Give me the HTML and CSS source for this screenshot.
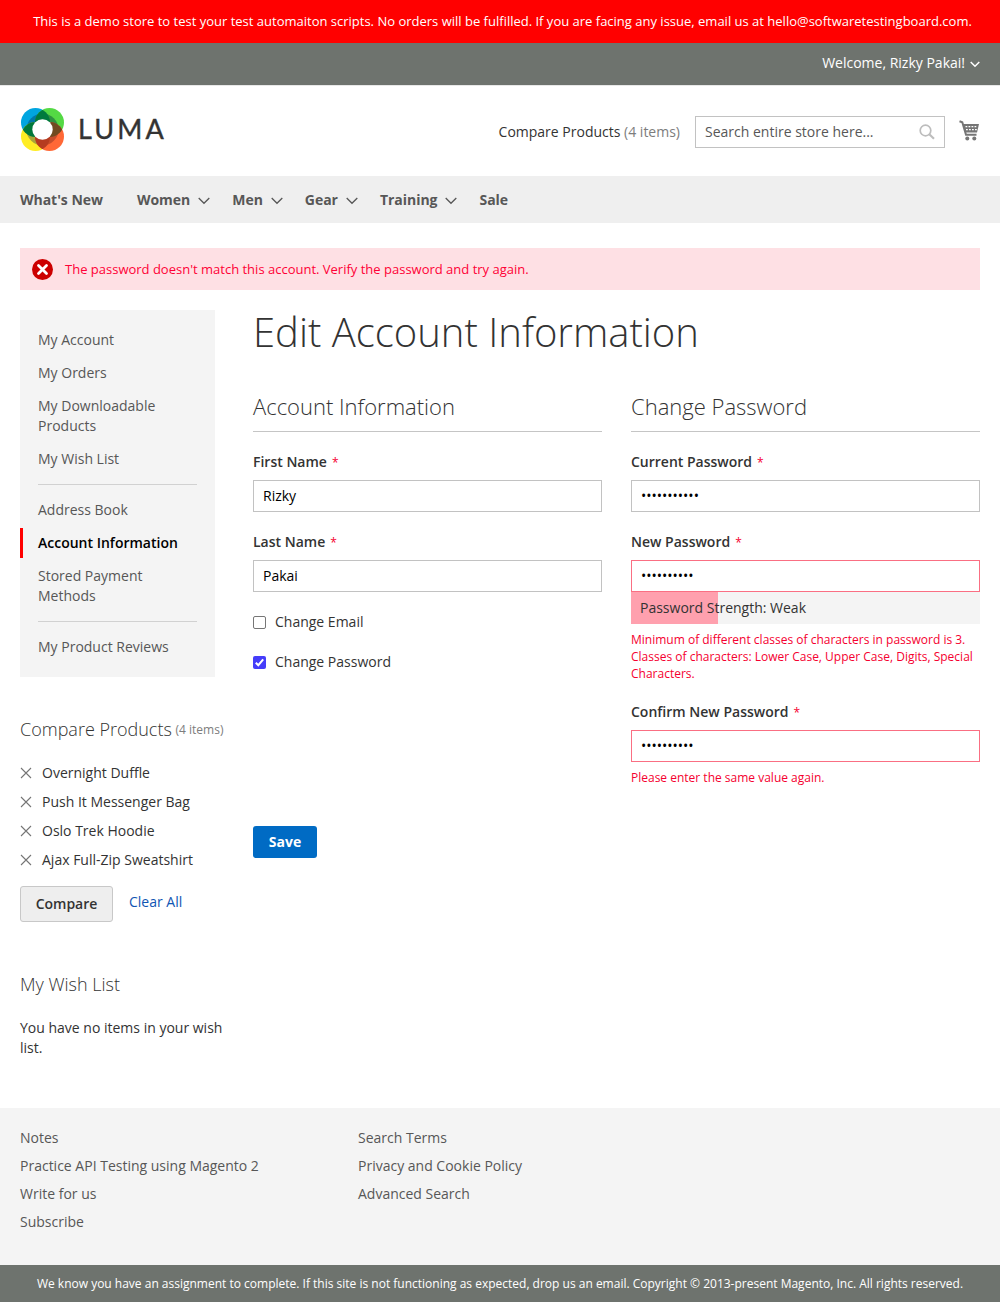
FILE: index.html
```html
<!DOCTYPE html>
<html lang="en">
<head>
<meta charset="utf-8">
<title>Edit Account Information</title>
<link rel="stylesheet" href="styles.css">
</head>
<body>
<svg class="defs" width="0" height="0">
  <symbol id="chevron" viewBox="0 0 12 8"><path d="M.7 1 6 6.300 11.300 1" fill="none" stroke="currentColor" stroke-width="1.300"/></symbol>
  <symbol id="cross" viewBox="0 0 12 12"><path d="M1 1l10 10M11 1L1 11" fill="none" stroke="currentColor" stroke-width="1.100"/></symbol>
</svg>
<div class="notice"><span>This is a demo store to test your test automaiton scripts. No orders will be fulfilled. If you are facing any issue, email us at hello@softwaretestingboard.com.</span></div>
<div class="panel"><span>Welcome, Rizky Pakai!</span><svg width="10" height="7" viewBox="0 0 10 7"><path d="M.7 1 5 5.200 9.300 1" fill="none" stroke="currentColor" stroke-width="1.500"/></svg></div>
<header class="header">
  <a class="logo">
    <svg width="44" height="44" viewBox="0 0 44 44">
      <defs>
        <clipPath id="tl"><circle cx="14.500" cy="14.500" r="14.500"/></clipPath>
        <clipPath id="tr"><circle cx="28.500" cy="14.500" r="14.500"/></clipPath>
        <clipPath id="bl"><circle cx="14.500" cy="28.500" r="14.500"/></clipPath>
        <clipPath id="br"><circle cx="28.500" cy="28.500" r="14.500"/></clipPath>
      </defs>
      <circle cx="14.500" cy="14.500" r="14.500" fill="#00a5e0"/>
      <circle cx="28.500" cy="14.500" r="14.500" fill="#54d944"/>
      <circle cx="14.500" cy="28.500" r="14.500" fill="#ffed24"/>
      <circle cx="28.500" cy="28.500" r="14.500" fill="#ff6836"/>
      <circle cx="21.500" cy="21.500" r="16" fill="#0076a8" clip-path="url(#tl)"/>
      <circle cx="21.500" cy="21.500" r="16" fill="#2f9140" clip-path="url(#tr)"/>
      <circle cx="21.500" cy="21.500" r="16" fill="#a9a637" clip-path="url(#bl)"/>
      <circle cx="21.500" cy="21.500" r="16" fill="#c64d2b" clip-path="url(#br)"/>
      <g clip-path="url(#tl)"><circle cx="28.500" cy="14.500" r="14.500" fill="#007a3d"/><circle cx="14.500" cy="28.500" r="14.500" fill="#00783a"/></g>
      <g clip-path="url(#br)"><circle cx="28.500" cy="14.500" r="14.500" fill="#704a20"/><circle cx="14.500" cy="28.500" r="14.500" fill="#b53b20"/></g>
      <circle cx="21.500" cy="21.500" r="10.200" fill="#fff"/>
    </svg>
    <span class="brand">LUMA</span>
  </a>
  <div class="tools">
    <span class="compare-link">Compare Products <em>(4 items)</em></span>
    <div class="search"><span>Search entire store here...</span>
      <svg width="16" height="16" viewBox="0 0 16 16" fill="none" stroke="#bdbdbd"><circle cx="6.500" cy="6.500" r="5.300" stroke-width="1.700"/><path d="M10.300 10.300 15 14.700" stroke-width="2.200"/></svg>
    </div>
    <svg class="cart" width="20" height="21" viewBox="0 0 20 21"><path d="M.5 1.200 3.300 2.300 7 14.700H17.500" fill="none" stroke="#757575" stroke-width="2"/><path d="M4 4H20L18 12.500H6.500Z" fill="#757575"/><path d="M6.500 6.700H18.500M7 9.700H18" stroke="#fff" stroke-width="1.200" stroke-dasharray="1.800 1.200"/><circle cx="8.300" cy="18.500" r="2" fill="#757575"/><circle cx="15.300" cy="18.500" r="2" fill="#757575"/></svg>
  </div>
</header>
<nav class="nav">
  <a class="first">What's New</a>
  <a>Women<svg width="12" height="8"><use href="#chevron"/></svg></a>
  <a>Men<svg width="12" height="8"><use href="#chevron"/></svg></a>
  <a>Gear<svg width="12" height="8"><use href="#chevron"/></svg></a>
  <a>Training<svg width="12" height="8"><use href="#chevron"/></svg></a>
  <a>Sale</a>
</nav>
<div class="message"><svg width="21" height="21" viewBox="0 0 21 21"><circle cx="10.500" cy="10.500" r="10.500" fill="#c00"/><path d="M6.500 6.500l8 8M14.500 6.500l-8 8" stroke="#fff" stroke-width="2.800" stroke-linecap="round"/></svg><span>The password doesn't match this account. Verify the password and try again.</span></div>
<div class="columns">
  <aside class="sidebar">
    <ul class="account-nav">
      <li>My Account</li>
      <li>My Orders</li>
      <li>My Downloadable Products</li>
      <li>My Wish List</li>
      <li class="rule"></li>
      <li>Address Book</li>
      <li class="current">Account Information</li>
      <li>Stored Payment Methods</li>
      <li class="rule"></li>
      <li>My Product Reviews</li>
    </ul>
    <section class="compare">
      <h3>Compare Products <small>(4 items)</small></h3>
      <ul>
        <li><svg width="12" height="12"><use href="#cross"/></svg>Overnight Duffle</li>
        <li><svg width="12" height="12"><use href="#cross"/></svg>Push It Messenger Bag</li>
        <li><svg width="12" height="12"><use href="#cross"/></svg>Oslo Trek Hoodie</li>
        <li><svg width="12" height="12"><use href="#cross"/></svg>Ajax Full-Zip Sweatshirt</li>
      </ul>
      <div class="actions"><button class="btn">Compare</button><a>Clear All</a></div>
    </section>
    <section class="wishlist">
      <h3>My Wish List</h3>
      <p>You have no items in your wish list.</p>
    </section>
  </aside>
  <main class="main">
    <h1>Edit Account Information</h1>
    <form>
      <div class="fieldsets">
        <div class="fieldset">
          <h2>Account Information</h2>
          <div class="field"><label>First Name<i>*</i></label><input type="text" value="Rizky"></div>
          <div class="field"><label>Last Name<i>*</i></label><input type="text" value="Pakai"></div>
          <label class="choice"><span class="box"></span>Change Email</label>
          <label class="choice"><span class="box checked"><svg width="13" height="13" viewBox="0 0 13 13"><path d="M2.800 6.700 5.300 9.200 10.200 3.400" fill="none" stroke="#fff" stroke-width="2"/></svg></span>Change Password</label>
        </div>
        <div class="fieldset">
          <h2>Change Password</h2>
          <div class="field"><label>Current Password<i>*</i></label><div class="secret">•••••••••••</div></div>
          <div class="field"><label>New Password<i>*</i></label><div class="secret invalid">••••••••••</div>
            <div class="meter">Password Strength: Weak</div>
            <div class="error">Minimum of different classes of characters in password is 3. Classes of characters: Lower Case, Upper Case, Digits, Special Characters.</div>
          </div>
          <div class="field"><label>Confirm New Password<i>*</i></label><div class="secret invalid">••••••••••</div>
            <div class="error">Please enter the same value again.</div>
          </div>
        </div>
      </div>
      <button class="save" type="button">Save</button>
    </form>
  </main>
</div>
<footer class="footer">
  <ul><li>Notes</li><li>Practice API Testing using Magento 2</li><li>Write for us</li><li>Subscribe</li></ul>
  <ul><li>Search Terms</li><li>Privacy and Cookie Policy</li><li>Advanced Search</li></ul>
</footer>
<div class="copyright"><span>We know you have an assignment to complete. If this site is not functioning as expected, drop us an email. Copyright © 2013-present Magento, Inc. All rights reserved.</span></div>
</body>
</html>
```
FILE: styles.css
```css
* { box-sizing: border-box; }
body { margin: 0; background: #fff; color: #333; font: 14px/20px "Open Sans", "Noto Sans", sans-serif; }
ul { list-style: none; margin: 0; padding: 0; }
h1, h2, h3, p { margin: 0; }
svg { flex: none; display: block; }
.defs { display: none; }
.notice { height: 43px; padding: 0 0 2px 5px; background: #f00; color: #fff; font-size: 13px; font-weight: 500; display: flex; align-items: center; justify-content: center; white-space: nowrap; }
.panel { height: 42px; padding: 0 20px 2px; background: #6e736e; color: #fff; font-weight: 500; display: flex; align-items: center; justify-content: flex-end; gap: 5px; }
.panel svg { margin-top: 2px; }
.header { height: 91px; padding: 0 20px; display: flex; justify-content: space-between; border-top: 1px solid #e8e8e8; }
.logo { display: flex; padding: 22px 0 0 1px; }
.brand { font: 27px/41px Lato, sans-serif; letter-spacing: 3.1px; margin-left: 13px; color: #333; -webkit-text-stroke: .4px #333; }
.tools { display: flex; height: 32px; margin-top: 30px; align-items: center; white-space: nowrap; }
.compare-link em { font-style: normal; color: #7d7d7d; }
.search { width: 250px; height: 32px; margin-left: 15px; padding: 0 9px; border: 1px solid #c2c2c2; display: flex; align-items: center; justify-content: space-between; color: #575757; }
.cart { margin: -3px 1px 0 14px; }
.nav { height: 47px; padding: 0 20px; background: #efefef; display: flex; align-items: center; color: #575757; font-weight: 700; }
.nav a { display: flex; align-items: center; gap: 8px; margin-right: 22px; white-space: nowrap; letter-spacing: -.03px; }
.nav .first { margin-right: 34px; }
.nav svg { margin-top: 2px; }
.message { margin: 25px 20px 20px; height: 42px; padding: 0 12px; background: #fee0e4; color: #ff0036; font-size: 13px; display: flex; align-items: center; gap: 12px; }
.columns { display: grid; grid-template-columns: 213px 727px; gap: 20px; padding: 0 20px; height: 798px; }
.account-nav { width: 195px; height: 367px; background: #f4f4f4; padding: 15px 0; color: #575757; }
.account-nav li { padding: 5px 35px 5px 15px; margin-bottom: 3px; border-left: 3px solid transparent; }
.account-nav li.current { color: #000; font-weight: 600; border-color: #f00; padding-right: 0; }
.account-nav li.rule { height: 1px; padding: 0; border: 0; margin: 10px 18px; background: #d1d1d1; }
h3 { font-size: 18px; line-height: 20px; font-weight: 300; white-space: nowrap; }
h3 small { font-size: 12px; line-height: 12px; font-weight: 400; color: #7d7d7d; margin-left: -1px; position: relative; top: -2px; }
.compare { margin-top: 42px; }
.compare ul { margin-top: 24px; }
.compare h3 { height: 20px; }
.compare li { display: flex; align-items: center; height: 20px; gap: 10px; margin-bottom: 9px; }
.compare li svg { color: #757575; }
.actions { display: flex; gap: 16px; margin-top: 16px; }
.btn { width: 93px; height: 36px; padding: 0; border: 1px solid #c8c8c8; border-radius: 3px; background: #eee; color: #333; font: 600 14px/20px "Open Sans", sans-serif; }
.actions a { color: #1055b3; line-height: 32px; }
.wishlist { margin-top: 52px; }
.wishlist p { margin-top: 24px; }
h1 { font-size: 40px; line-height: 44px; font-weight: 300; white-space: nowrap; }
.fieldsets { display: grid; grid-template-columns: 349px 349px; gap: 29px; height: 424px; margin-top: 38px; }
h2 { font-size: 22px; line-height: 28px; height: 40px; font-weight: 300; border-bottom: 1px solid #c5c5c5; margin-bottom: 20px; }
.field { margin-bottom: 20px; }
.field label { display: block; font-weight: 600; line-height: 20px; margin-bottom: 8px; }
.field label i { font: 400 12px/16px "Open Sans", sans-serif; color: #f50030; margin-left: 5px; }
.field input, .secret { display: block; width: 100%; height: 32px; border: 1px solid #c2c2c2; padding: 0 9px; color: #000; background: #fff; font: 14px/30px "Open Sans", sans-serif; }
.field input { padding-bottom: 2px; }
.secret.invalid { border-color: #fa6f83; }
.meter { height: 32px; padding: 0 9px; line-height: 32px; background: linear-gradient(90deg, #ffa0ae 87px, #f4f4f4 87px); }
.error { font-size: 12px; line-height: 17px; color: #f50030; margin-top: 7px; }
.choice { display: flex; align-items: center; height: 20px; gap: 9px; margin-bottom: 20px; }
.box { width: 13px; height: 13px; border: 1px solid #767676; border-radius: 2px; background: #fff; }
.box.checked { border: 0; background: #453dfa; }
.save { display: block; width: 64px; height: 32px; margin-top: 10px; padding: 0; border: 0; border-radius: 3px; background: #006bc4; color: #fff; font: 700 14px/20px "Open Sans", sans-serif; }
.footer { height: 157px; padding: 20px; background: #f4f4f4; color: #575757; display: grid; grid-template-columns: 338px 1fr; }
.footer li { margin-bottom: 8px; }
.copyright { height: 37px; background: #6e736e; color: #fff; font-size: 12px; font-weight: 500; display: flex; align-items: center; justify-content: center; white-space: nowrap; }
```
